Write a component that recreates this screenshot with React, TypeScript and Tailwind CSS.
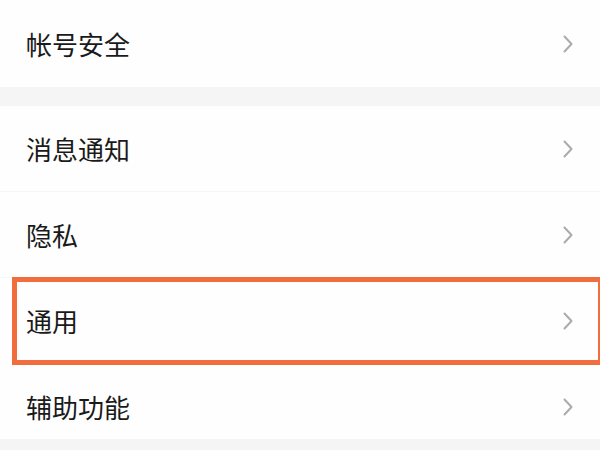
import { ReactNode } from "react";

const FONT = { fontFamily: '"Noto Sans CJK SC", "Noto Sans", sans-serif' };

function Chevron() {
  return (
    <svg
      width="12"
      height="18"
      viewBox="0 0 12 18"
      fill="none"
      stroke="#ababab"
      strokeWidth="2"
      strokeLinecap="round"
      strokeLinejoin="round"
      aria-hidden="true"
    >
      <path d="M2.5 1.5 L9.5 9 L2.5 16.5" />
    </svg>
  );
}

function SettingRow({
  label,
  highlighted,
  divider,
  className = "h-[86px]",
}: {
  label: string;
  highlighted?: boolean;
  divider?: boolean;
  className?: string;
}) {
  return (
    <div
      className={`relative flex items-center justify-between pl-[26px] pr-[26px] ${className} ${
        divider ? "border-b border-[#f6f6f6]" : ""
      }`}
    >
      <span className="text-[26px] leading-none text-[#1a1a1a]">{label}</span>
      <Chevron />
      {/* Highlight box */}
      {highlighted && (
        <div className="pointer-events-none absolute left-[12px] right-0 top-[-1px] bottom-[-1px] border-[5px] border-r-2 border-[#f26d3d]" />
      )}
    </div>
  );
}

function Card({ children }: { children: ReactNode }) {
  return <div className="bg-[#fefefe]">{children}</div>;
}

export default function App() {
  return (
    <div
      className="w-[600px] h-[450px] overflow-hidden bg-[#f5f5f5]"
      style={FONT}
    >
      <Card>
        <SettingRow label="帐号安全" className="h-[87px]" />
      </Card>
      <div className="h-[19px]" />
      <Card>
        <SettingRow label="消息通知" divider />
        <SettingRow label="隐私" divider />
        <SettingRow label="通用" highlighted />
        <SettingRow label="辅助功能" className="h-[75px] pt-[11px]" />
      </Card>
    </div>
  );
}
